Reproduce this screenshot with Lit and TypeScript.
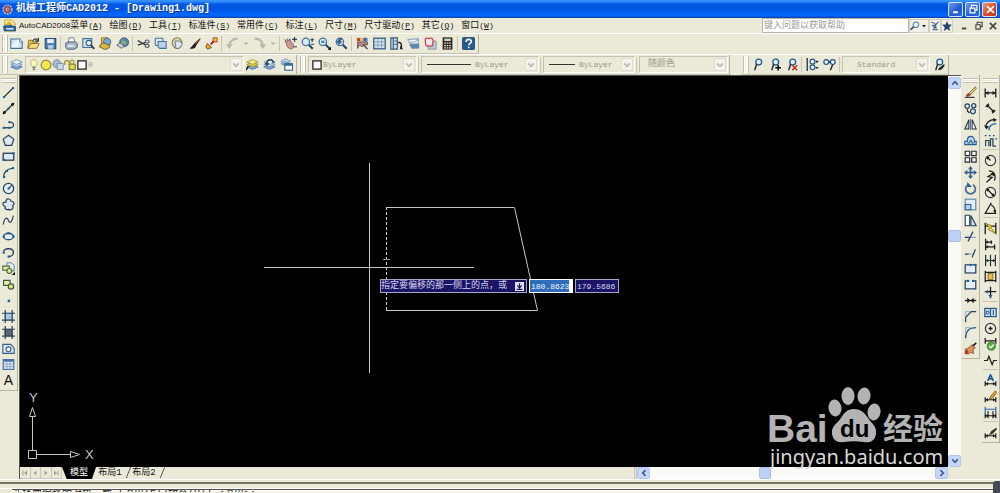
import { LitElement, html, svg, css, nothing } from "lit";
import { customElement, property } from "lit/decorators.js";

/* Icon artwork, each drawn on a 16 x 16 grid. */
const node = (x: number, y: number) => svg`<rect x=${x - 1.2} y=${y - 1.2} width="2.6" height="2.6" fill="#1d5f9e"/>`;
const K = "#1c1c1c";
const B = "#2f5f90";

const layers = svg`<path d="M1 11l7-3 7 3-7 3z" fill="#7fa6cf" stroke="#49739f"/><path d="M1 8l7-3 7 3-7 3z" fill="#b9d2ea" stroke="#5f8ab5"/><path d="M1 5l7-3 7 3-7 3z" fill="#e6f1fb" stroke="#6d93bb"/>`;
const gears = svg`<path d="M1 11l7-3 7 3-7 3z" fill="#7fa6cf" stroke="#49739f"/><path d="M1 8l7-3 7 3-7 3z" fill="#d9cf4e" stroke="#8b8b2e"/><path d="M1 5l7-3 7 3-7 3z" fill="#f0ea7c" stroke="#99953c"/>`;
const lens = svg`<path d="M9.500 9.500l5 5" stroke="#28466a" stroke-width="2.600"/><circle cx="6" cy="6" r="4.500" fill="#d7eaf8" stroke="#45729f" stroke-width="1.500"/>`;
const leader = svg`<circle cx="9.500" cy="5" r="3.600" fill="#e2eefa" stroke="#28598e" stroke-width="1.600"/><path d="M7 7.500L4.500 15" stroke="#222c38" stroke-width="1.800"/>`;
const dim = svg`<path d="M1.500 3v11M14.500 3v11M2 8.500h12" stroke="#1c1c1c" stroke-width="1.600"/><path d="M1.500 8.500l4-2.500v5zM14.500 8.500l-4-2.500v5z" fill="#1c1c1c"/>`;
const dimLow = svg`<path d="M1.500 9v6M14.500 9v6M2 12h12" stroke="#1c1c1c" stroke-width="1.500"/><path d="M1.500 12l3.500-2.200v4.400zM14.500 12l-3.500-2.200v4.400z" fill="#1c1c1c"/>`;
const hatchFrame = (fill: string) => svg`<rect x="3" y="3.500" width="10" height="9" fill=${fill}/><path d="M4 0v16M12.500 0v16M0 4h16M0 12.500h16" stroke="#28415c" stroke-width="1.500"/>`;

const ICONS: Record<string, unknown> = {
  app: svg`<circle cx="8" cy="8" r="6.500" fill="#8a5560" stroke="#cdd3e4" stroke-width="1.800" stroke-dasharray="2.600 1.600"/><circle cx="8" cy="8" r="3.500" fill="#d9b8bd" stroke="#5a2a3a"/><circle cx="8.500" cy="8" r="1.300" fill="#c0202b"/>`,
  doc: svg`<path d="M2 1h9l4 4v10H2z" fill="#f5e28a" stroke="#c2a23a"/><path d="M0 9l8-5 3 4 5 1v6H1z" fill="#2c5f96"/><path d="M3 8l4-5 3 4z" fill="#e8b92f"/><path d="M4 12h9" stroke="#dbe9f7" stroke-width="2"/>`,
  new: svg`<path d="M1 2.500h11l3 3V14H1z" fill="#cfe2f3" stroke="#4b7192" stroke-width="1.300"/><path d="M12 2v4h3.500" fill="#fff" stroke="#4b7192"/><path d="M2 9l8-6h1v10H2z" fill="#fff" opacity=".55"/>`,
  open: svg`<path d="M1 13L2 4h4l1 2h5v7z" fill="#e4bf4c" stroke="#7c6321"/><path d="M1 14l4-6h10l-3 6z" fill="#f3dc82" stroke="#7c6321"/><path d="M7 5c2-4 5-3 6-1M14 1v4h-4" fill="none" stroke="#333" stroke-width="1.400"/>`,
  save: svg`<path d="M1.500 2h13v12.500h-12l-1-1z" fill="#4d7cae" stroke="#254d7a" stroke-width="1.300"/><rect x="4" y="2.500" width="8" height="5" fill="#e8f1fa"/><rect x="5" y="10" width="6.500" height="4.500" fill="#b4cce3"/>`,
  print: svg`<path d="M4 7L5 1h6l1 6" fill="#fff" stroke="#5b6f85"/><path d="M1 7.500l4-1.500h8l2 2v5l-4 2H3l-2-2z" fill="#aab8cc" stroke="#4b5f78" stroke-width="1.200"/><path d="M3 11h8" stroke="#fff" stroke-width="1.500"/>`,
  preview: svg`<path d="M1 2h11v11H1z" fill="#cfe2f3" stroke="#4b7192" stroke-width="1.300"/><circle cx="8.500" cy="7.500" r="3.300" fill="#eef7ff" stroke="#365b82" stroke-width="1.400"/><path d="M11 10l4 4.500" stroke="#28415c" stroke-width="2.400"/>`,
  publish: svg`<path d="M3 1h8l2 3v5H3z" fill="#eac54b" stroke="#80651d"/><circle cx="10" cy="6" r="4.500" fill="#79a6d0" stroke="#35658f"/><path d="M1 10l4-3 8 3v3l-5 2.500-7-3z" fill="#d9b540" stroke="#5f5427"/>`,
  sphere: svg`<circle cx="10" cy="6.500" r="5.500" fill="#5a87a6" stroke="#32536e"/><path d="M7 3c3 2 5 1 6 5-3 2-4 0-6 2z" fill="#7fb27c"/><path d="M1 10l4-3 5 4-3 3z" fill="#c5d2dd" stroke="#555"/>`,
  cut: svg`<path d="M1 4.500l9 5M1 10l9-3" stroke="#30353c" stroke-width="1.500"/><ellipse cx="12.500" cy="5.500" rx="2.500" ry="1.800" fill="none" stroke="#555b66" stroke-width="1.500"/><ellipse cx="12.500" cy="11" rx="2.500" ry="1.800" fill="none" stroke="#555b66" stroke-width="1.500"/>`,
  copyclip: svg`<rect x="1.500" y="1.500" width="9.500" height="9" rx="1" fill="#dbe9f6" stroke="#4b7192" stroke-width="1.300"/><path d="M5 5.500h10V14H7l-2-2z" fill="#b7d2ea" stroke="#4b7192" stroke-width="1.300"/>`,
  paste: svg`<ellipse cx="7.500" cy="7.500" rx="6" ry="6.500" fill="#e0d3ac" stroke="#86795a" stroke-width="1.300"/><path d="M5 5h6l3 4-4 5H6z" fill="#d7e6f2" stroke="#556f86"/>`,
  brush: svg`<path d="M15 2L8 8l2 2z" fill="#8c4c2b" stroke="#3b2218"/><path d="M8 8c-2 1-3 4-6 6 4 1 8 0 8-4z" fill="#26211f"/>`,
  match: svg`<path d="M10 1h5v5h-5z" fill="#f4c33a" stroke="#a62c1c"/><path d="M11 5L7 9" stroke="#a12" stroke-width="2"/><path d="M3 8l5 5-5 2-2-3z" fill="#e9a22f" stroke="#6a3b18"/>`,
  undo: svg`<path d="M14 2C7 2 4 6 4 12" fill="none" stroke="#b9b8ae" stroke-width="2.600"/><path d="M0 9h8l-4 6z" fill="#b9b8ae"/>`,
  redo: svg`<path d="M2 2c7 0 10 4 10 10" fill="none" stroke="#b9b8ae" stroke-width="2.600"/><path d="M8 9h8l-4 6z" fill="#b9b8ae"/>`,
  drop: svg`<path d="M4 6.500h8L8 10.500z" fill="#b3b1a6"/>`,
  pan: svg`<path d="M1 3l3 3V2l2 3 1-3 2 4 2 2 1 5-4 2-4-3z" fill="#c99a94" stroke="#8d5e5c"/><path d="M10 3h6M13 0v6M12 12h4" stroke="#28415c" stroke-width="1.500"/>`,
  zoomrt: svg`${lens}<path d="M11.500 3.500h4.500M13.700 1.500V6M12 9h4" stroke="#28415c" stroke-width="1.300"/>`,
  zoomwin: svg`${lens}<rect x="4" y="4.500" width="4" height="3" fill="#5a87b5"/><path d="M12 16l4-4v4z" fill="#111"/>`,
  zoomprev: svg`${lens}<path d="M9 2C5 1 3 4 5 7M2 5l3 4 3-3z" fill="#335e8c" stroke="#335e8c" stroke-width="1.200"/>`,
  props: svg`<rect x="1" y="1" width="4" height="4" fill="#d1443b"/><rect x="5" y="1" width="4" height="4" fill="#e8c331"/><rect x="9" y="1" width="5" height="4" fill="#3e68c2"/><path d="M2 6h12v4l-3-1-3 3-4-2-2 4z" fill="#c08a86" stroke="#4d4245"/><path d="M9 9l5 6" stroke="#333" stroke-width="1.600"/>`,
  design: svg`<rect x="1" y="1.500" width="14" height="13" fill="#d7e8f5" stroke="#35597d" stroke-width="1.600"/><path d="M6 2v12M10.500 2v12M2 6h12M2 10h12" stroke="#6f93b5"/>`,
  palettes: svg`<path d="M1 1h8v14H1zM4 1v14" fill="#cde0f1" stroke="#34587d" stroke-width="1.400"/><path d="M5 5h4M5 9h4" stroke="#34587d"/><path d="M10 7c3-1 5 2 4 6" fill="none" stroke="#222" stroke-width="1.700"/><path d="M13 10l3 5h-4z" fill="#222"/>`,
  sheet: svg`<path d="M1 3l13-1v11l-8 1z" fill="#a9c2d8" stroke="#7c95ad"/><path d="M3 10l5-3 7 2v5H6z" fill="#5e88ac"/><path d="M2 5l9-1M7 8l7-2" stroke="#eef5fb" stroke-width="1.600"/>`,
  markup: svg`<path d="M5 5h10v10H5z" fill="#b9c7d6" stroke="#7c8fa3"/><path d="M2 2c2-2 3 0 4 0s3-2 4 0 2 2 1 4 1 4-1 5-3-1-5 0-3-1-3-3-1-4 0-6z" fill="#fbe3e6" stroke="#d0303f" stroke-width="1.400"/>`,
  calc: svg`<rect x="2" y="0.500" width="12" height="15" fill="#2b2420"/><rect x="4" y="2" width="8" height="3" fill="#c9d8c8"/><path d="M4 7.500h8M4 10.500h8M4 13.500h8" stroke="#e9dfd4" stroke-width="1.600" stroke-dasharray="2 1"/>`,
  help: svg`<rect x="0.500" y="0.500" width="15" height="15" rx="1.500" fill="#24598f" stroke="#153c66"/><path d="M5 6c0-4 6.500-4 6.500-.500 0 2.500-3.200 2.300-3.200 4.500M8.300 11.800v2" fill="none" stroke="#fff" stroke-width="2"/>`,
  layers,
  layerstate: svg`${gears}<path d="M0 15l3-5" stroke="#222" stroke-width="2"/>`,
  layerprev: svg`${layers}<path d="M13 6c-1-5-7-5-8-1v3" fill="none" stroke="#27466b" stroke-width="2"/><path d="M2 6h6l-3 4z" fill="#27466b"/>`,
  layermgr: svg`<path d="M1 4l6-3 6 3-6 3z" fill="#cfe2f3" stroke="#5f8ab5"/><path d="M1 7l6-3 6 3-6 3z" fill="#9bbbdc" stroke="#5f8ab5"/><rect x="6" y="7" width="9.500" height="8" fill="#fff" stroke="#2d6196" stroke-width="1.400"/><path d="M6 8.500h9" stroke="#2d6196" stroke-width="2"/>`,
  bulb: svg`<path d="M8 1c-6 0-5 6-2 9h4c3-3 4-9-2-9z" fill="#fbf7b8" stroke="#a9a25b"/><path d="M6 11.500h4M6.500 14h3" stroke="#777" stroke-width="1.800"/>`,
  sun: svg`<circle cx="8" cy="8" r="6.500" fill="#f1ea48" stroke="#8c8740" stroke-width="1.500"/>`,
  vp: svg`<circle cx="6.500" cy="6.500" r="5.500" fill="#a9b9c9" stroke="#73879b"/><path d="M7 6h8v8H7z" fill="#c9d8e5" stroke="#66809a"/>`,
  lock: svg`<path d="M1 8V5c0-4 6-4 6 0v3" fill="none" stroke="#a39d38" stroke-width="2"/><path d="M7 7h8v7H7z" fill="#e0da4f" stroke="#817c2a" stroke-width="1.500"/><circle cx="11" cy="4" r="2.500" fill="none" stroke="#a39d38" stroke-width="1.500"/>`,
  swatch: svg`<rect x="2.500" y="2.500" width="11" height="11" fill="#fff" stroke="#222" stroke-width="1.700"/>`,
  leader,
  leaderadd: svg`${leader}<path d="M9 12h7M12.500 8.500v7" stroke="#111" stroke-width="2"/>`,
  leaderdel: svg`${leader}<path d="M9 9l6 6M15 9l-6 6" stroke="#c5261f" stroke-width="1.800"/>`,
  leaderalign: svg`<path d="M1.500 0v16" stroke="#222" stroke-width="1.500"/><circle cx="8" cy="4.500" r="3" fill="#e2eefa" stroke="#28598e" stroke-width="1.500"/><circle cx="8" cy="11.500" r="3" fill="#e2eefa" stroke="#28598e" stroke-width="1.500"/><path d="M12 4.500h3M12 12h3" stroke="#222" stroke-width="2"/>`,
  leadercollect: svg`<circle cx="4" cy="5" r="3" fill="#e2eefa" stroke="#28598e" stroke-width="1.500"/><circle cx="12" cy="5" r="3" fill="#e2eefa" stroke="#28598e" stroke-width="1.500"/><path d="M12 8l-3 7M7 5h2" stroke="#222" stroke-width="1.700"/>`,
  leaderstyle: svg`${leader}<path d="M15.500 7L9 12l-2 3 5-1 3-4z" fill="#26211f"/>`,
  /* draw */
  line: svg`<path d="M3 13L13 3" stroke=${K} stroke-width="1.500"/>${node(2.5, 13.500)}${node(13.5, 2.500)}`,
  xline: svg`<path d="M1 15L15 1" stroke=${K} stroke-width="1.500"/>${node(8, 8)}<circle cx="3" cy="13" r="1.800" fill=${K}/><circle cx="13" cy="3" r="1.800" fill=${K}/>`,
  pline: svg`<path d="M1.500 12h8M9 12c7 0 7-7 0-7" fill="none" stroke="#33506f" stroke-width="1.600"/>${node(2, 12)}${node(9, 12)}${node(9, 5)}`,
  polygon: svg`<path d="M8 1.500l6.500 4.800-2.500 7.700H4L1.500 6.300z" fill="#dce9f5" stroke="#2b3f55" stroke-width="1.500"/>`,
  rect: svg`<rect x="1.500" y="4" width="13" height="8.500" fill="#dce9f5" stroke="#223448" stroke-width="1.500"/>${node(2, 12)}${node(14, 4)}`,
  arc: svg`<path d="M2 14C2 7 7 3 14 2.500" fill="none" stroke="#2b3f55" stroke-width="1.500"/>${node(2.5, 13.500)}${node(6, 6)}${node(13.5, 2.500)}`,
  circle: svg`<circle cx="8" cy="8" r="6.300" fill="#e6f0f9" stroke="#2b4661" stroke-width="1.600"/><path d="M8 8l4-4" stroke="#2b4661" stroke-width="1.400"/>${node(8, 8)}`,
  revcloud: svg`<path d="M5 3c1-3 6-2 6 1 4 0 5 4 2 5.500 2 4-2 6-5 4.500-3 1-5-1-4-3.500-4-1-4-6 1-5.500z" fill="#dce9f5" stroke="#2b3f55" stroke-width="1.500"/>`,
  spline: svg`<path d="M1.500 13c2-10 5-9 6.500-5s4 3 6-6" fill="none" stroke="#2b3f55" stroke-width="1.400"/>`,
  ellipse: svg`<ellipse cx="8" cy="8" rx="6" ry="4" fill="#e6f0f9" stroke="#23507e" stroke-width="1.700"/>${node(2, 8)}${node(14, 8)}${node(8, 4)}`,
  ellipsearc: svg`<path d="M2 7c1-5 12-5 12 1 0 4-4 5-6 5" fill="none" stroke="#2b4661" stroke-width="1.700"/>${node(2, 8)}${node(8, 13)}`,
  insert: svg`<path d="M6 1h6l3 3v7H6z" fill="#dce9f5" stroke="#55708a"/><path d="M1 5h8v5H1z" fill="#eef0a0" stroke="#4c6c3e" stroke-width="1.400"/><circle cx="9" cy="11" r="3" fill="#dfe97f" stroke="#4c6c3e" stroke-width="1.400"/><path d="M12 16l4-4v4z" fill="#111"/>`,
  block: svg`<path d="M2 3h8v6H2z" fill="#eef0a0" stroke="#3f5b50" stroke-width="1.500"/><circle cx="11" cy="10.500" r="3.300" fill="#dfe97f" stroke="#3f5b50" stroke-width="1.500"/>`,
  point: svg`<rect x="7" y="7" width="3" height="3" fill="#1d5f9e"/>`,
  hatch: hatchFrame("#a9c8e2"),
  gradient: hatchFrame("#5c6571"),
  region: svg`<path d="M1 3h10l4 5v6H1z" fill="#d5e6f5" stroke="#3b6088" stroke-width="1.400"/><circle cx="8" cy="9" r="3" fill="#fff" stroke="#3b6088" stroke-width="1.400"/>`,
  table: svg`<rect x="1.500" y="2" width="13" height="12" fill="#e6effa" stroke="#4168a8" stroke-width="1.400"/><path d="M2 3.500h12" stroke="#4168a8" stroke-width="2"/><path d="M6 4v10M10 4v10M2 7.500h12M2 10.700h12" stroke="#7896c7"/>`,
  /* modify */
  erase: svg`<path d="M14 1L6 9l2 2 7-8z" fill="#e8cf79" stroke="#6e5a2a"/><path d="M6 9l-3 2 1 2 4-2z" fill="#c8453c" stroke="#77312a"/><path d="M1 14h12" stroke="#333" stroke-width="1.400"/>`,
  copy: svg`<circle cx="4" cy="5" r="2.800" fill="#dce9f5" stroke="#2b4661" stroke-width="1.500"/><circle cx="12" cy="4.500" r="2.500" fill="#dce9f5" stroke="#2b4661" stroke-width="1.500"/><circle cx="11" cy="11.500" r="3" fill="#dce9f5" stroke="#2b4661" stroke-width="1.500"/><path d="M4 9c0 3 1 4 3 4" fill="none" stroke=${K} stroke-width="1.400"/>`,
  mirror: svg`<path d="M6 2v11.500H1z" fill="#c9d8e6" stroke="#222f3d" stroke-width="1.300"/><path d="M10 2v11.500h5z" fill="#fff" stroke="#222f3d" stroke-width="1.300"/><path d="M8 1v14" stroke="#2f5f90"/>`,
  offset: svg`<path d="M1 13V9h3c0-8 9-8 9 0h2v4z" fill="#b9d6ef" stroke="#2a5d8f" stroke-width="1.400"/><path d="M4 11h3c0-4 3-4 3 0h3" fill="none" stroke="#2a5d8f" stroke-width="1.300"/>`,
  array: svg`<path d="M1.500 1.500H7V7H1.500zM9.500 1.500H15V7H9.500zM1.500 9.500H7V15H1.500zM9.500 9.500H15V15H9.500z" fill="#f3f6f9" stroke="#252b33" stroke-width="1.400"/>`,
  move: svg`<path d="M8 2v12M2 8h12" stroke=${B} stroke-width="2"/><path d="M8 0L5 4h6zM8 16l-3-4h6zM0 8l4-3v6zM16 8l-4-3v6z" fill=${B}/>`,
  rotate: svg`<path d="M5 3.500a6 6 0 1 0 6 0" fill="none" stroke="#4a7099" stroke-width="2.200"/><path d="M4 0v6h6z" fill="#2f5f90"/>`,
  scale: svg`<rect x="1.500" y="1.500" width="13" height="13" fill="#e3eef8" stroke="#5a86b3" stroke-width="1.400"/><rect x="1.500" y="8" width="7" height="6.500" fill="#b5d0ea" stroke="#3a6795" stroke-width="1.400"/>`,
  stretch: svg`<path d="M1.500 1.500H7V14.500H1.500z" fill="#fff" stroke="#28415c" stroke-width="1.400"/><path d="M8.500 2l6.500 12.500H8.500z" fill="#cfe0ef" stroke="#28415c" stroke-width="1.400"/>`,
  trim: svg`<path d="M1 9h6M5 14l6-12" stroke="#28415c" stroke-width="1.500"/><path d="M9 9h6" stroke="#5a86b3" stroke-width="1.500" stroke-dasharray="2 1"/>`,
  extend: svg`<path d="M1 10h5M10 14l4-10" stroke="#28415c" stroke-width="1.500"/><path d="M7 10h4" stroke="#5a86b3" stroke-width="1.500" stroke-dasharray="2 1"/>`,
  breakpt: svg`<rect x="1.500" y="3.500" width="13" height="10" fill="#e3eef8" stroke="#28415c" stroke-width="1.500"/>${node(8, 3.500)}${node(14, 3.500)}`,
  break: svg`<path d="M5 3.500H1.500v10h13v-10H11" fill="#e3eef8" stroke="#28415c" stroke-width="1.500"/>${node(5, 3.500)}${node(11, 3.500)}`,
  join: svg`<path d="M1 8h14" stroke=${K} stroke-width="1.600"/><path d="M8 8L4 4.500v7zM8 8l4-3.500v7z" fill=${K}/>`,
  chamfer: svg`<path d="M2 15V9l7-7h6" fill="none" stroke="#28415c" stroke-width="1.500"/><path d="M2 8V2h6" fill="none" stroke="#7ba3cc"/>`,
  fillet: svg`<path d="M2 15C2 6 6 2 15 2" fill="none" stroke="#28598e" stroke-width="1.800"/><path d="M2 9V2h6" fill="none" stroke="#7ba3cc"/>`,
  explode: svg`<path d="M7 6l3-3 1 3 3 1-3 3 1 4-4-1-3 2-1-4-3-2 3-1z" fill="#d99557" stroke="#8b4a30"/><path d="M11 5l4-4" stroke="#222" stroke-width="2"/><path d="M1 10h4v5H1z" fill="#b53a2c"/>`,
  /* dimension */
  dimlinear: dim,
  dimaligned: svg`<path d="M4 4l8 8" stroke=${K} stroke-width="1.500"/><path d="M2 6l4-4M10 14l4-4" stroke=${K} stroke-width="1.600"/><path d="M3 3l4 1-3 3zM13 13l-4-1 3-3z" fill=${K}/>`,
  dimarc: svg`<path d="M2 12C2 6 7 2 13 2" fill="none" stroke=${K} stroke-width="1.600"/><path d="M6 15c0-5 4-8 9-8" fill="none" stroke="#2f6ca8" stroke-width="2"/><path d="M11 0l5 2-4 3zM0 9l3 5 3-4z" fill=${K}/>`,
  dimord: svg`<path d="M2 15V8h4v7M8 15V6h3v9h4M1 2h2M6 2h2M11 2h2M14 6h2" fill="none" stroke="#28415c" stroke-width="1.500"/>`,
  dimrad: svg`<circle cx="8" cy="8" r="6.300" fill="#f0eee0" stroke="#333" stroke-width="1.400"/><path d="M8 8L4 4" stroke=${K} stroke-width="1.500"/><path d="M3 3l4 1-3 3z" fill=${K}/>`,
  dimjog: svg`<path d="M6 1c6 0 9 5 7 12M12 4L5 8l5 1-7 6" fill="none" stroke=${K} stroke-width="1.500"/><path d="M13 3l-1 5-4-4z" fill=${K}/>`,
  dimdia: svg`<circle cx="8" cy="8" r="6.300" fill="#f0eee0" stroke="#333" stroke-width="1.400"/><path d="M4 4l8 8" stroke=${K} stroke-width="1.500"/><path d="M3 3l4 1-3 3zM13 13l-4-1 3-3z" fill=${K}/>`,
  dimang: svg`<path d="M9 1L1.500 14H15M8 3c4 2 6 6 6 10" fill="none" stroke=${K} stroke-width="1.500"/><path d="M14 14l-3-4h4z" fill=${K}/>`,
  qdim: svg`<path d="M1.500 1v14M14.500 1v14M2 5h12" stroke=${K} stroke-width="1.600"/><path d="M3 2l7 3-2 1 6 8-9-5 2-1z" fill="#f0df35" stroke="#847619"/>`,
  dimbase: svg`<path d="M2 1v14M2 5h8M9 3v4M2 11h12M13 8v6" fill="none" stroke=${K} stroke-width="1.600"/><path d="M2 5l3-2v4zM2 11l3-2v4z" fill=${K}/>`,
  dimcont: svg`<path d="M2 1v14M8 1v14M14 1v14M2 8h12" stroke="#28323c" stroke-width="1.500"/><path d="M2 8l3-2v4zM14 8l-3-2v4z" fill=${K}/>`,
  dimspace: svg`<path d="M1.500 1v14M14.500 1v14M2 3h12M2 13h12" stroke=${K} stroke-width="1.500"/><rect x="5" y="4.500" width="6" height="7" fill="#e8bb55" stroke="#7b5d1b"/>`,
  dimbreak: svg`<path d="M1 7h14M8 1v14" stroke=${K} stroke-width="1.600"/><path d="M1 7l4-2.500v5zM8 15l-2.500-4h5z" fill="#28598e"/>`,
  tolerance: svg`<rect x="1" y="3" width="14" height="10" fill="#d8eaf8" stroke="#28598e" stroke-width="1.600"/><path d="M8 3v10M11.500 5v6" stroke="#28598e" stroke-width="1.500"/><circle cx="4.500" cy="8" r="1.800" fill="none" stroke="#28598e" stroke-width="1.300"/>`,
  center: svg`<circle cx="8" cy="8" r="6.300" fill="#f0eee0" stroke="#333" stroke-width="1.500"/><path d="M5.500 8h5M8 5.500v5" stroke=${K} stroke-width="1.700"/>`,
  inspect: svg`<path d="M1.500 0v7M14.500 0v7M2 3.500h12" stroke=${K} stroke-width="1.500"/><circle cx="9" cy="10" r="5" fill="#58ad49" stroke="#2c7424"/><path d="M6.500 10l2 2 3.500-4" fill="none" stroke="#fff" stroke-width="1.500"/>`,
  jogline: svg`<path d="M0 8h4l2-5 4 10 2-5h4" fill="none" stroke=${K} stroke-width="1.500"/>`,
  dimtext: svg`${dimLow}<path d="M4.500 8.500L8 1l3.500 7.500M6 6h4" fill="none" stroke="#1f5c9a" stroke-width="2"/>`,
  dimedit: svg`${dimLow}<path d="M14 1L8 8l-1 3 3-1 6-7z" fill="#eaa12c" stroke="#7e5316"/>`,
  dimupdate: svg`${dimLow}<path d="M1.500 1v8M14.500 1v8M2 4h12" stroke="#2f6ca8" stroke-width="1.500"/><path d="M5 6v9M11 6v9" stroke=${K} stroke-width="1.300"/>`,
  dimstyle: svg`${dimLow}<path d="M15 2L9 6l-3 5 4-1 6-6z" fill="#3a2f22"/>`,
  /* chrome */
  min: svg`<path d="M3 12h7" stroke="currentColor" stroke-width="3"/>`,
  restore: svg`<path d="M5 5V2h8v7h-3M3 6h7v7H3z" fill="none" stroke="currentColor" stroke-width="1.800"/>`,
  close: svg`<path d="M3 3l10 10M13 3L3 13" stroke="currentColor" stroke-width="2.600"/>`,
  find: svg`<path d="M6 9l-5 5" stroke="#28466a" stroke-width="2.600"/><circle cx="9.500" cy="6" r="4.500" fill="#e4f0fa" stroke="#40658c" stroke-width="1.500"/>`,
  tri: svg`<path d="M4 6h8l-4 5z" fill="#222"/>`,
  comm: svg`<path d="M2 2c6 0 7 4 6 7M14 2c-4 1-5 4-5 7M3 7c4 0 5 2 5 5M4 14h9M5 11h6" fill="none" stroke="#3d5d7e" stroke-width="1.800"/>`,
  star: svg`<path d="M8 0l2.300 5.500 5.700.500-4.300 3.800L13 16l-5-3.300L3 16l1.300-6.200L0 6l5.700-.500z" fill="#24466f"/>`,
  up: svg`<path d="M3.500 10.500L8 6l4.500 4.500" fill="none" stroke="#42588a" stroke-width="2.600"/>`,
  down: svg`<path d="M3.500 5.500L8 10l4.500-4.500" fill="none" stroke="currentColor" stroke-width="2.600"/>`,
  left: svg`<path d="M10.500 3.500L6 8l4.500 4.500" fill="none" stroke="#42588a" stroke-width="2.600"/>`,
  right: svg`<path d="M5.500 3.500L10 8l-4.500 4.500" fill="none" stroke="#42588a" stroke-width="2.600"/>`,
  first: svg`<path d="M4 3v10" stroke="#a5a396" stroke-width="2"/><path d="M12 3v10L6 8z" fill="#a5a396"/>`,
  prev: svg`<path d="M11 3v10L5 8z" fill="#a5a396"/>`,
  next: svg`<path d="M5 3v10l6-5z" fill="#a5a396"/>`,
  last: svg`<path d="M12 3v10" stroke="#a5a396" stroke-width="2"/><path d="M4 3v10l6-5z" fill="#a5a396"/>`,
};

const icon = (name: string) => html`<svg class="icon" viewBox="0 0 16 16" aria-hidden="true">${ICONS[name]}</svg>`;

const STANDARD = "new open save | print preview publish sphere | cut copyclip paste brush match | undo drop redo drop | pan zoomrt zoomwin zoomprev | props design palettes sheet markup calc | help";
const DRAW = "line xline pline polygon rect arc circle revcloud spline ellipse ellipsearc insert block point hatch gradient region table";
const MODIFY = "erase copy mirror offset array move rotate scale stretch trim extend breakpt break join chamfer fillet explode";
const DIMENSION = "dimlinear dimaligned dimarc dimord | dimrad dimjog dimdia dimang | qdim dimbase dimcont dimspace dimbreak | tolerance center inspect jogline | dimtext dimedit dimupdate | dimstyle";

const MENUS: [string, string, string][] = [
  ["AutoCAD2008", "菜单", "A"],
  ["", "绘图", "D"],
  ["", "工具", "T"],
  ["", "标准件", "S"],
  ["", "常用件", "C"],
  ["", "标注", "L"],
  ["", "尺寸", "M"],
  ["", "尺寸驱动", "P"],
  ["", "其它", "Q"],
  ["", "窗口", "W"],
];

const base = css`
  * { box-sizing: border-box; }
  button, input, select { margin: 0; padding: 0; border: 0; border-radius: 0; background: none; font: inherit; color: inherit; outline: none; }
  .icon { display: block; width: 13px; height: 13px; flex: none; }
`;

/* A docked strip of tool buttons; "|" in the list makes a divider. */
@customElement("tool-strip")
export class ToolStrip extends LitElement {
  @property() tools = "";
  @property({ type: Boolean, reflect: true }) vertical = false;
  static styles = [base, css`
    :host { display: flex; align-items: center; flex: none; }
    :host([vertical]) { flex-direction: column; }
    .tool { display: flex; align-items: center; justify-content: center; width: 17px; height: 17px; }
    .drop { width: 10px; }
    .drop .icon { width: 10px; }
    :host([vertical]) .tool { height: 16px; }
    .rule { width: 1px; height: 15px; margin: 0 2px 0 1px; background: #c9c5b2; }
    :host([vertical]) .rule { width: 15px; height: 1px; margin: 1px 0 2px; }
  `];
  render() {
    return this.tools.split(" ").map((t) =>
      t === "|"
        ? html`<span class="rule"></span>`
        : html`<button class="tool ${t === "drop" ? "drop" : ""}" aria-label=${t}>${icon(t)}</button>`);
  }
}

/* A flat property drop-down with an optional preview at its left. */
@customElement("property-box")
export class PropertyBox extends LitElement {
  @property() label = "";
  @property() value = "";
  @property() preview = "";
  static styles = [base, css`
    :host { display: flex; align-items: center; height: 17px; border: 1px solid #c6c2ae; border-right-color: #fff; border-bottom-color: #fff; color: #9b998c; padding-left: 2px; font-family: "Liberation Mono", "Noto Sans CJK SC", monospace; font-size: 8px; }
    .preview { display: flex; align-items: center; }
    .preview .icon { width: 12px; height: 12px; }
    .long { width: 44px; height: 1px; background: #333; margin: 0 4px 0 3px; }
    .short { width: 26px; height: 1px; background: #333; margin: 0 4px 0 3px; }
    .indent { width: 12px; }
    .inset { width: 6px; }
    .choice { appearance: none; flex: 1; min-width: 0; height: 15px; line-height: 15px; opacity: 1; }
    .cjk { font-size: 9px; }
    .arrow { display: flex; align-items: center; justify-content: center; width: 12px; height: 13px; margin-right: 1px; background: #f4f2ea; border: 1px solid #e0ddd0; color: #bbb9ae; pointer-events: none; }
    .arrow .icon { width: 10px; height: 10px; }
  `];
  private art() {
    switch (this.preview) {
      case "swatch": return icon("swatch");
      case "layer": return ["bulb", "sun", "vp", "lock", "swatch"].map((n) => icon(n));
      case "": return nothing;
      default: return html`<span class=${this.preview}></span>`;
    }
  }
  render() {
    return html`
      <span class="preview">${this.art()}</span>
      <select class="choice ${/[^\x00-\x7f]/.test(this.value) ? "cjk" : ""}" aria-label=${this.label}><option>${this.value}</option></select>
      <span class="arrow">${icon("down")}</span>`;
  }
}

@customElement("drawing-canvas")
export class DrawingCanvas extends LitElement {
  static styles = [base, css`
    :host { display: block; position: relative; background: #000; overflow: visible; }
    .scene { position: absolute; left: 0; top: 0; width: 100%; height: 100%; }
    .ucs { position: absolute; left: 4px; bottom: 0; width: 80px; height: 80px; }
    .ucs-text { font: 13px "Liberation Sans", Arial, sans-serif; fill: #c4c4c4; }
    .prompt { position: absolute; left: 360px; top: 203px; display: flex; gap: 2px; height: 14px; font-family: "Liberation Mono", "Noto Sans CJK SC", monospace; font-size: 8px; line-height: 12px; color: #d6d6ee; }
    .message { display: flex; align-items: center; justify-content: space-between; width: 147px; font-size: 9px; background: #1b1464; border: 1px solid #a6a6c6; white-space: nowrap; padding-right: 2px; }
    .message .icon { width: 9px; height: 9px; }
    .coord { width: 44px; height: 14px; background: #1b1464; border: 1px solid #a6a6c6; padding-left: 1px; }
    .active { background: linear-gradient(90deg, #2f6dba 39px, #fff 39px); border-color: #fff; color: #f2f6ff; }
    .mark { position: absolute; right: 0; bottom: -8px; width: 184px; height: 92px; overflow: visible; z-index: 2; }
    .brand { font: bold 39px "Liberation Sans", Arial, sans-serif; fill: #b3b3b3; }
    .brand-du { font: bold 24px "Liberation Sans", Arial, sans-serif; fill: #000; }
    .brand-cjk { font: bold 30px "Noto Sans CJK SC", sans-serif; fill: #b3b3b3; }
    .url { font: 20px "Noto Sans", "Open Sans", sans-serif; fill: #d9d9d9; }
  `];
  render() {
    return html`
      <svg class="scene" shape-rendering="crispEdges" fill="none" stroke="#c8c8c8">
        <path d="M349.500 87v210M244 191.500h210"/>
        <path d="M366 131.500h128M366 234.500h151"/>
        <path d="M494.500 131.500l23 103" shape-rendering="auto"/>
        <path d="M366.500 131v103" stroke-dasharray="3 2"/>
        <path d="M363 183.500h7" stroke="#b08c74"/>
      </svg>
      <svg class="ucs" viewBox="0 0 80 80" fill="none" stroke="#c4c4c4">
        <path d="M4.500 63.500h8v8h-8zM8.500 63V29M12 67.500h34M5.500 29.500h6l-3-9zM46.500 64.500v6l9-3z"/>
        <text class="ucs-text" x="5" y="15" stroke="none">Y</text>
        <text class="ucs-text" x="61" y="72" stroke="none">X</text>
      </svg>
      <div class="prompt">
        <span class="message">指定要偏移的那一侧上的点，或<svg class="icon" viewBox="0 0 16 16" aria-hidden="true"><rect width="16" height="16" fill="#e4e4f4"/><path d="M8 2v8M4 6l4 5 4-5M3 13h10" fill="none" stroke="#1b1464" stroke-width="2"/></svg></span>
        <input class="coord active" aria-label="X" value="180.8623">
        <input class="coord" aria-label="Y" value="179.5686">
      </div>
      <svg class="mark" viewBox="0 0 184 92">
        <text class="brand" x="3" y="59">Bai</text>
        <g fill="#b3b3b3">
          <ellipse cx="71" cy="25" rx="6.500" ry="8.500" transform="rotate(-8 71 25)"/>
          <ellipse cx="84" cy="13" rx="6.500" ry="9"/>
          <ellipse cx="100" cy="13" rx="6.500" ry="8.500" transform="rotate(8 100 13)"/>
          <ellipse cx="110" cy="29" rx="6.500" ry="8.500" transform="rotate(8 110 29)"/>
          <path d="M90 26c7 0 11 4 14 9 4 6 9 8 8 16-1 7-6 9-12 8-7-1-13-1-20 0-7 1-11-2-12-8-1-8 5-10 9-16 3-5 6-9 13-9z"/>
        </g>
        <text class="brand-du" x="76" y="54">du</text>
        <text class="brand-cjk" x="119" y="56">经验</text>
        <text class="url" x="6" y="81">jingyan.baidu.com</text>
      </svg>`;
  }
}

@customElement("app-root")
export class AppRoot extends LitElement {
  static styles = [base, css`
    :host { display: flex; flex-direction: column; height: 100vh; overflow: hidden; background: #ebe9d8; color: #111; font-family: "Liberation Mono", "Noto Sans CJK SC", monospace; font-size: 9px; line-height: 14px; white-space: nowrap; }
    .title { display: flex; align-items: center; flex: none; height: 18px; padding: 0 3px 0 0; gap: 2px; background: linear-gradient(#3c96fb 0, #2a85f8 2px, #0558e6 4px, #0054e3 9px, #0566fb 14px, #0564f5 16px, #0a3fa8 18px); color: #fff; }
    .title .icon { margin: 0 1px 0 2px; width: 11px; height: 11px; }
    .name { flex: 1; margin: 0; font-size: 10px; font-weight: bold; text-shadow: 1px 1px 0 #0a3c9c; }
    .win { display: flex; align-items: center; justify-content: center; width: 15px; height: 15px; border: 1px solid #d6e4fb; border-radius: 2px; background: linear-gradient(135deg, #6d9bf0, #2257d0 60%, #2f6be8); color: #fff; }
    .win.exit { background: linear-gradient(135deg, #ee9a7e, #d9482a 55%, #c43b1c); }
    .menu { display: flex; align-items: center; flex: none; height: 15px; padding-left: 3px; }
    .menu > .icon { margin-right: 3px; }
    .entries { display: flex; gap: 7px; flex: 1; }
    .entry { display: flex; align-items: center; height: 14px; }
    .latin { font-size: 8px; }
    .product { font-family: "Liberation Sans", Arial, sans-serif; font-size: 8px; }
    .key { text-decoration: underline; }
    .ask { width: 147px; height: 15px; background: #fff; border: 1px solid #b6b4a4; padding-left: 1px; }
    .ask::placeholder { color: #9a9a94; opacity: 1; }
    .info { display: flex; align-items: center; height: 14px; background: #f1efe5; border: 1px solid #d2cfbf; }
    .info .icon { width: 10px; height: 10px; }
    .info.search .icon + .icon { width: 8px; }
    .mdi { display: flex; gap: 3px; padding: 0 2px 0 6px; color: #444; }
    .mdi button { width: 11px; display: flex; justify-content: center; }
    .mdi .icon { width: 10px; height: 10px; }
    .dock { display: flex; align-items: center; flex: none; height: 21px; border-top: 1px solid #fff; }
    .dock.second { gap: 1px; }
    .bar { display: flex; align-items: center; height: 100%; border-right: 1px solid #b5b2a0; border-bottom: 1px solid #c4c1b0; padding-right: 1px; }
    .grip { width: 6px; height: 17px; margin: 0 0 0 2px; border: 1px solid #c1beac; border-width: 0 1px; box-shadow: inset 1px 0 #fff, inset -2px 0 #fff; }
    .divider { width: 1px; height: 16px; margin: 0 2px 0 1px; background: #c9c5b2; }
    .layerbox { width: 219px; }
    .colorbox { width: 109px; margin-left: 2px; }
    .linebox { width: 118px; }
    .weightbox { width: 92px; }
    .plotbox { width: 89px; }
    .bars-end { margin-left: 10px; }
    .stylebox { width: 88px; }
    .main { display: flex; flex: 1; min-height: 0; }
    .palette { display: flex; flex-direction: column; align-items: center; align-self: flex-start; flex: none; width: 18px; padding: 3px 0 2px; border-right: 1px solid #b5b2a0; border-bottom: 1px solid #b5b2a0; }
    .palette .grip { width: 15px; height: 5px; margin: 0 0 1px; border-width: 1px 0; box-shadow: inset 0 1px #fff, inset 0 -1px #fff; }
    .text-tool { width: 17px; height: 16px; font: 14px/16px "Liberation Sans", Arial, sans-serif; }
    .view { display: flex; flex-direction: column; flex: 1; min-width: 0; margin-left: 1px; border-left: 1px solid #55534a; }
    .stage { display: grid; grid-template-columns: minmax(0, 1fr) 13px; flex: 1; min-height: 0; border-top: 1px solid #55534a; }
    .vscroll { display: flex; flex-direction: column; justify-content: space-between; align-items: stretch; padding-top: 1px; background: #fbfaf6; }
    .arrow { display: flex; align-items: center; justify-content: center; width: 13px; height: 12px; background: #c6d6fb; border: 1px solid #b3c5f0; border-radius: 2px; color: #42588a; }
    .arrow .icon { width: 10px; height: 10px; }
    .thumb { background: #bdd0f8; border: 1px solid #a9bdec; border-radius: 2px; }
    .vtrack { flex: 1; display: flex; flex-direction: column; }
    .vtrack .thumb { height: 12px; }
    .above { flex: 141; }
    .below { flex: 212; }
    .foot { display: flex; flex: none; height: 12px; padding-right: 13px; }
    .nav { display: flex; width: 42px; }
    .nav button { display: flex; align-items: center; justify-content: center; flex: 1; border-right: 1px solid #c9c6b6; border-bottom: 1px solid #c9c6b6; }
    .nav .icon { width: 8px; height: 8px; }
    .tabs { display: flex; flex: 1; }
    .tab { position: relative; height: 12px; line-height: 12px; padding: 0 8px 0 2px; font-size: 9px; width: 34px; text-align: center; }
    .tab::after { content: ""; position: absolute; right: 1px; top: 0; width: 1px; height: 11px; background: #555; transform: skewX(-22deg); }
    .tab.current { padding: 0 2px; background: #000; color: #fff; clip-path: polygon(0 0, 100% 0, 88% 100%, 14% 100%); }
    .hscroll { display: flex; width: 36%; max-width: 314px; background: #fbfaf6; }
    .htrack { display: flex; flex: 1; }
    .htrack .thumb { width: 12px; height: 12px; }
    .sash { width: 3px; border: 1px solid #c9c6b6; background: #ebe9d8; }
    .right { display: flex; flex: none; gap: 2px; padding-left: 1px; }
    .command { flex: none; height: 14px; display: flex; flex-direction: column; position: relative; border-top: 1px solid #fff; }
    .bar-line { height: 2px; margin-top: 2px; background: #77736b; }
    .bar-space { height: 5px; border-bottom: 1px solid #fff; }
    .log { height: 3px; margin-left: 12px; border-top: 1px solid #55534a; background: #fbfaf6; overflow: hidden; font-size: 10px; line-height: 9px; color: #222; }
    .knob { position: absolute; right: 0; top: 1px; width: 7px; height: 13px; background: #454958; border-radius: 3px 0 0 0; }
  `];
  render() {
    return html`
      <header class="title">
        ${icon("app")}<h1 class="name">机械工程师CAD2012 - [Drawing1.dwg]</h1>
        <button class="win" aria-label="最小化">${icon("min")}</button>
        <button class="win" aria-label="还原">${icon("restore")}</button>
        <button class="win exit" aria-label="关闭">${icon("close")}</button>
      </header>
      <nav class="menu">
        ${icon("doc")}
        <div class="entries">
          ${MENUS.map(([pre, name, key]) => html`<button class="entry">${pre ? html`<span class="product">${pre}</span>` : nothing}<span>${name}</span><span class="latin">(<span class="key">${key}</span>)</span></button>`)}
        </div>
        <input class="ask" aria-label="帮助" placeholder="键入问题以获取帮助">
        <button class="info search" aria-label="搜索">${icon("find")}${icon("tri")}</button>
        <button class="info" aria-label="通讯中心">${icon("comm")}</button>
        <button class="info" aria-label="收藏夹">${icon("star")}</button>
        <div class="mdi">
          <button aria-label="最小化图形">${icon("min")}</button>
          <button aria-label="还原图形">${icon("restore")}</button>
          <button aria-label="关闭图形">${icon("close")}</button>
        </div>
      </nav>
      <div class="dock">
        <div class="bar"><span class="grip"></span><tool-strip tools=${STANDARD}></tool-strip></div>
      </div>
      <div class="dock second">
        <div class="bar">
          <span class="grip"></span><tool-strip tools="layers"></tool-strip>
          <property-box class="layerbox" label="图层" preview="layer" value="0"></property-box>
          <tool-strip tools="layerstate layerprev layermgr"></tool-strip>
        </div>
        <div class="bar">
          <span class="grip"></span>
          <property-box class="colorbox" label="颜色" preview="swatch" value="ByLayer"></property-box>
          <span class="divider"></span>
          <property-box class="linebox" label="线型" preview="long" value="ByLayer"></property-box>
          <span class="divider"></span>
          <property-box class="weightbox" label="线宽" preview="short" value="ByLayer"></property-box>
          <span class="divider"></span>
          <property-box class="plotbox" label="打印样式" preview="inset" value="随颜色"></property-box>
        </div>
        <div class="bar bars-end">
          <span class="grip"></span><tool-strip tools="leader leaderadd leaderdel | leaderalign leadercollect |"></tool-strip>
          <property-box class="stylebox" label="多重引线样式" preview="indent" value="Standard"></property-box>
          <tool-strip tools="leaderstyle"></tool-strip>
        </div>
      </div>
      <div class="main">
        <aside class="palette">
          <span class="grip"></span>
          <tool-strip vertical tools=${DRAW}></tool-strip>
          <button class="text-tool" aria-label="多行文字">A</button>
        </aside>
        <section class="view">
          <div class="stage">
            <drawing-canvas></drawing-canvas>
            <div class="vscroll">
              <button class="arrow" aria-label="向上">${icon("up")}</button>
              <div class="vtrack"><span class="above"></span><span class="thumb"></span><span class="below"></span></div>
              <button class="arrow" aria-label="向下">${icon("down")}</button>
            </div>
          </div>
          <div class="foot">
            <div class="nav">${["first", "prev", "next", "last"].map((n) => html`<button aria-label=${n}>${icon(n)}</button>`)}</div>
            <div class="tabs">
              <button class="tab current">模型</button><button class="tab">布局1</button><button class="tab">布局2</button>
            </div>
            <div class="hscroll">
              <span class="sash"></span>
              <button class="arrow" aria-label="向左">${icon("left")}</button>
              <div class="htrack"><span class="above"></span><span class="thumb"></span><span class="below"></span></div>
              <button class="arrow" aria-label="向右">${icon("right")}</button>
            </div>
          </div>
        </section>
        <div class="right">
          <aside class="palette"><span class="grip"></span><tool-strip vertical tools=${MODIFY}></tool-strip></aside>
          <aside class="palette"><span class="grip"></span><tool-strip vertical tools=${DIMENSION}></tool-strip></aside>
        </div>
      </div>
      <footer class="command">
        <div class="bar-line"></div>
        <div class="bar-space"></div>
        <div class="log">选择要偏移的对象，或 [退出(E)/放弃(U)] &lt;退出&gt;:</div>
        <span class="knob"></span>
      </footer>`;
  }
}
